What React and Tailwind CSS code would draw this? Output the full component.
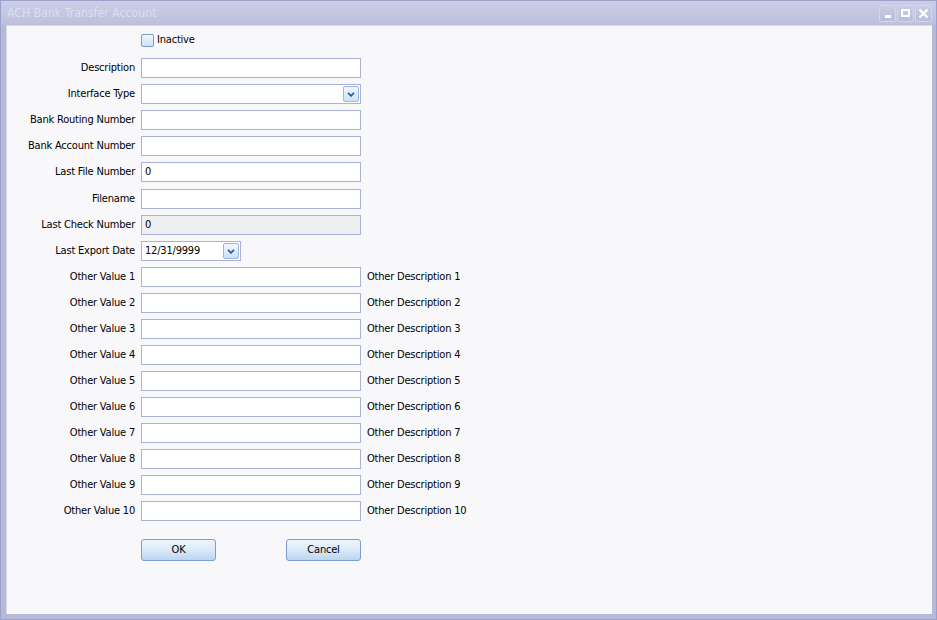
import React from 'react';

const font = "font-['Tahoma','DejaVu_Sans_Condensed','Liberation_Sans',sans-serif]";

const Chevron = () => (
  <svg width="8" height="5" viewBox="0 0 8 5">
    <path d="M1 0.8 L4 3.8 L7 0.8" fill="none" stroke="#2a5ba8" strokeWidth="1.8" />
  </svg>
);

const DropButton = () => (
  <div className="w-[16px] h-[16px] rounded-[2px] border border-[#9ab8df] bg-gradient-to-b from-[#f2f7fd] to-[#cfe1f4] flex items-center justify-center">
    <Chevron />
  </div>
);

const TextBox = ({ value = '', disabled = false, children, w = 'w-[220px]' }) => (
  <div
    className={`${w} h-[20px] border border-[#a9b1d6] flex items-center pl-[3px] pr-[1px] ${
      disabled ? 'bg-[#efeff2]' : 'bg-white'
    }`}
  >
    <span className="flex-1 text-[11px] tracking-[-0.2px] text-black">{value}</span>
    {children}
  </div>
);

const Row = ({ label, children, extra, className = '' }) => (
  <div className={`flex items-center h-[20px] ${className}`}>
    <div className="w-[128px] text-right text-[11px] tracking-[-0.2px] text-black">{label}</div>
    <div className="ml-[6px]">{children}</div>
    {extra && <div className="ml-[6px] text-[11px] tracking-[-0.2px] text-black">{extra}</div>}
  </div>
);

const TitleButton = ({ children }) => (
  <div className="w-[17px] h-[17px] rounded-[2px] border border-[#d3d6eb] bg-gradient-to-b from-[#c9cce4] to-[#b9bdda] flex items-center justify-center">
    {children}
  </div>
);

export default function App() {
  const others = Array.from({ length: 10 }, (_, i) => i + 1);
  return (
    <div className={`w-[937px] h-[620px] bg-[#b6bad9] border border-[#9ca1c9] flex flex-col ${font}`}>
      <div className="h-[24px] flex items-center justify-between pl-[6px] pr-[4px] bg-gradient-to-b from-[#cbcee7] to-[#bcc0dd]">
        <span className="text-[12px] text-[#dcdff0] tracking-[0.1px]">ACH Bank Transfer Account</span>
        <div className="flex gap-[1px]">
          <TitleButton>
            <div className="w-[6px] h-[3px] bg-white mt-[6px]" />
          </TitleButton>
          <TitleButton>
            <div className="w-[9px] h-[8px] border-2 border-white" />
          </TitleButton>
          <TitleButton>
            <svg width="11" height="11" viewBox="0 0 11 11">
              <path d="M1.5 1.5 L9.5 9.5 M9.5 1.5 L1.5 9.5" stroke="white" strokeWidth="2.4" />
            </svg>
          </TitleButton>
        </div>
      </div>
      <div className="flex-1 ml-[5px] mr-[4px] mb-[5px] bg-[#f8f8fb] border-t border-l border-[#d8daea] pt-[7px]">
        <div className="flex items-center h-[14px] ml-[134px] mb-[11px]">
          <div className="w-[13px] h-[13px] rounded-[2px] border border-[#7a9cc9] bg-gradient-to-b from-[#f2f7fd] to-[#cfe0f3]" />
          <span className="ml-[3px] text-[11px] tracking-[-0.2px] text-black">Inactive</span>
        </div>
        <div className="flex flex-col gap-[6px]">
          <Row label="Description"><TextBox /></Row>
          <Row label="Interface Type">
            <TextBox><DropButton /></TextBox>
          </Row>
          <Row label="Bank Routing Number"><TextBox /></Row>
          <Row label="Bank Account Number"><TextBox /></Row>
          <Row label="Last File Number"><TextBox value="0" /></Row>
          <Row label="Filename" className="mt-[1px]"><TextBox /></Row>
          <Row label="Last Check Number"><TextBox value="0" disabled /></Row>
          <Row label="Last Export Date">
            <TextBox value="12/31/9999" w="w-[100px]"><DropButton /></TextBox>
          </Row>
          {others.map((n) => (
            <Row key={n} label={`Other Value ${n}`} extra={`Other Description ${n}`}>
              <TextBox />
            </Row>
          ))}
        </div>
        <div className="flex gap-[70px] ml-[134px] mt-[18px]">
          {['OK', 'Cancel'].map((t) => (
            <button
              key={t}
              className="w-[75px] h-[22px] rounded-[3px] border border-[#7c9fcf] bg-gradient-to-b from-[#eef5fd] via-[#dbe9f8] to-[#bcd5f0] text-[11px] tracking-[-0.2px] text-black"
            >
              {t}
            </button>
          ))}
        </div>
      </div>
    </div>
  );
}
